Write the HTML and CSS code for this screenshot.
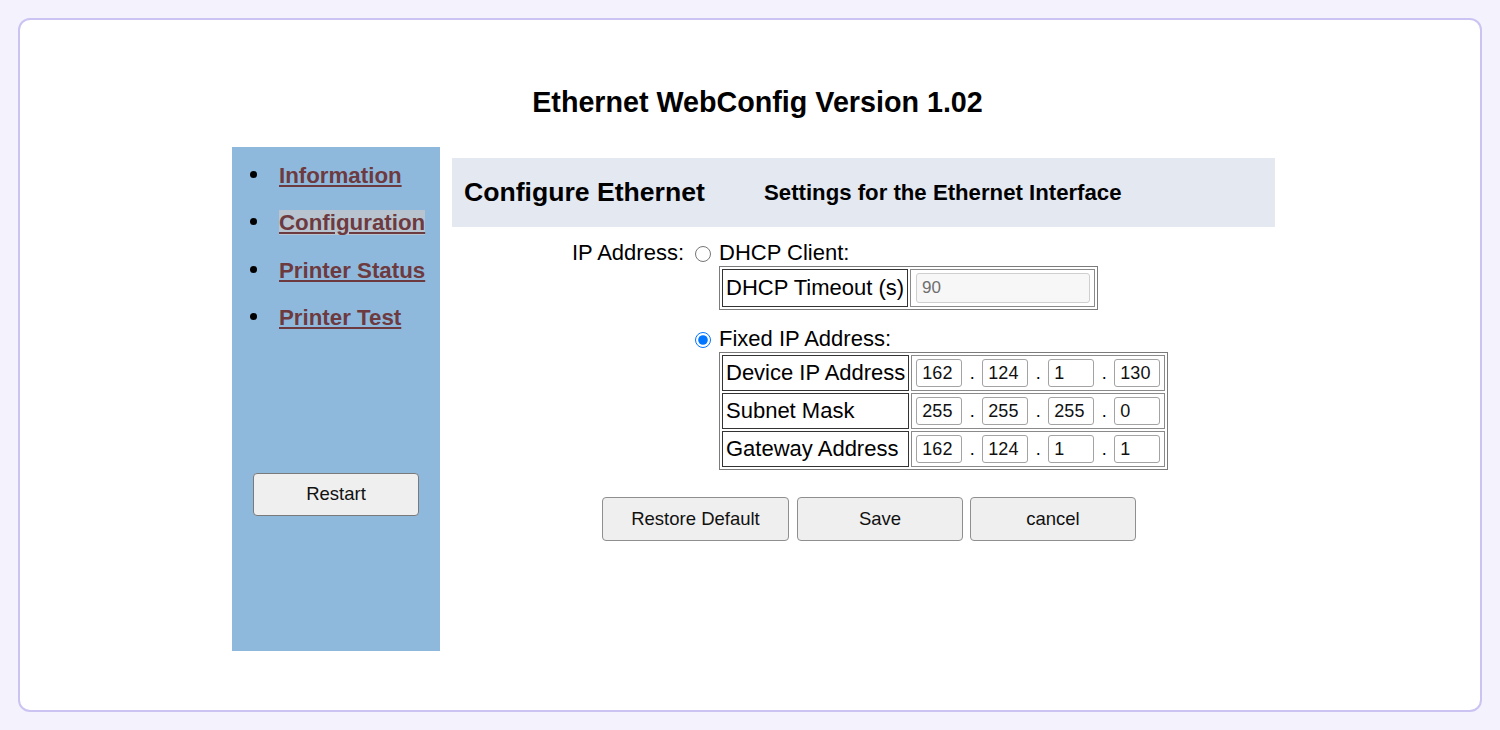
FILE: index.html
```html
<!doctype html>
<html lang="en">
<head>
    <meta charset="UTF-8">
    <title>Ethernet WebConfig</title>
    <link rel="stylesheet" href="styles.css">
</head>
<body>

<div class="page">
    <div class="frame">
        <h1 class="title">Ethernet WebConfig Version 1.02</h1>

        <div class="main">
            <div class="sidebar">
                <ul class="nav">
                    <li><a href="#">Information</a></li>
                    <li><a href="#" class="active">Configuration</a></li>
                    <li><a href="#">Printer Status</a></li>
                    <li><a href="#">Printer Test</a></li>
                </ul>
                <button class="btn btn-restart">Restart</button>
            </div>

            <div class="content">
                <div class="content-header">
                    <h2>Configure Ethernet</h2>
                    <h3>Settings for the Ethernet Interface</h3>
                </div>

                <form class="eth-form">
                    <div class="row">
                        <div class="label">IP Address:</div>
                        <div class="field">
                            <label class="opt"><input type="radio" name="mode"> DHCP Client:</label>
                            <table class="cfg-table">
                                <tr>
                                    <td class="name">DHCP Timeout (s)</td>
                                    <td class="val"><input type="text" class="ip-long" value="90" disabled></td>
                                </tr>
                            </table>
                        </div>
                    </div>

                    <div class="row row-fixed">
                        <div class="label"></div>
                        <div class="field">
                            <label class="opt"><input type="radio" name="mode" checked> Fixed IP Address:</label>
                            <table class="cfg-table">
                                <tr>
                                    <td class="name">Device IP Address</td>
                                    <td class="val">
                                        <div class="ip">
                                            <input type="text" value="162"><span>.</span><input type="text" value="124"><span>.</span><input type="text" value="1"><span>.</span><input type="text" value="130">
                                        </div>
                                    </td>
                                </tr>
                                <tr>
                                    <td class="name">Subnet Mask</td>
                                    <td class="val">
                                        <div class="ip">
                                            <input type="text" value="255"><span>.</span><input type="text" value="255"><span>.</span><input type="text" value="255"><span>.</span><input type="text" value="0">
                                        </div>
                                    </td>
                                </tr>
                                <tr>
                                    <td class="name">Gateway Address</td>
                                    <td class="val">
                                        <div class="ip">
                                            <input type="text" value="162"><span>.</span><input type="text" value="124"><span>.</span><input type="text" value="1"><span>.</span><input type="text" value="1">
                                        </div>
                                    </td>
                                </tr>
                            </table>
                        </div>
                    </div>

                    <div class="buttons">
                        <button type="button" class="btn btn-wide">Restore Default</button>
                        <button type="button" class="btn">Save</button>
                        <button type="button" class="btn">cancel</button>
                    </div>
                </form>
            </div>
        </div>
    </div>
</div>

</body>
</html>
```

FILE: styles.css
```css
* {
    margin: 0;
    padding: 0;
    box-sizing: border-box;
}
body {
    background: #f4f2fd;
    font-family: "Liberation Sans", Arial, sans-serif;
    color: #000;
}
.page {
    padding: 18px;
}
.frame {
    height: 694px;
    background: #fff;
    border: 2px solid #cbc4f2;
    border-radius: 12px;
}
.title {
    margin-top: 65px;
    padding-left: 15px;
    text-align: center;
    font-size: 28.7px;
    line-height: 34px;
    font-weight: bold;
}
.main {
    display: flex;
    align-items: flex-start;
    margin: 28px 0 0 212px;
}

/* 左侧导航 */
.sidebar {
    width: 208px;
    height: 504px;
    background: #8eb9dc;
}
.nav {
    padding: 16px 0 0 18px;
    list-style: none;
}
.nav li {
    font-size: 22.3px;
    line-height: 26px;
    margin-bottom: 21.3px;
}
.nav li::before {
    content: "";
    display: inline-block;
    width: 7px;
    height: 7px;
    margin-right: 22px;
    border-radius: 50%;
    background: #000;
    vertical-align: 5px;
}
.nav a {
    color: #6d3a40;
    font-weight: bold;
    text-decoration: underline;
}
.nav a.active {
    background: #b8c5d1;
}
.btn {
    width: 166px;
    height: 44px;
    background: #efefef;
    border: 1px solid #8f8f8f;
    border-radius: 4px;
    font-family: "Liberation Sans", Arial, sans-serif;
    font-size: 18.5px;
    color: #111;
}
.btn-restart {
    display: block;
    height: 43px;
    margin: 142px 0 0 21px;
    border-color: #7a7a7a;
}

/* 右侧内容 */
.content {
    width: 823px;
    margin: 11px 0 0 12px;
}
.content-header {
    display: flex;
    align-items: center;
    height: 69px;
    padding-left: 12px;
    background: #e4e8f1;
}
.content-header h2 {
    width: 300px;
    font-size: 26.6px;
    font-weight: bold;
}
.content-header h3 {
    font-size: 22.2px;
    font-weight: bold;
}
.eth-form {
    margin-top: 13px;
    font-size: 22px;
    line-height: 26px;
}
.row {
    display: grid;
    grid-template-columns: 232px 1fr;
}
.row-fixed {
    margin-top: 16px;
}
.label {
    text-align: right;
}
.opt {
    display: flex;
    align-items: center;
    height: 26px;
}
.opt input {
    width: 16px;
    height: 16px;
    margin: 1px 8px 0 11px;
}
.cfg-table {
    margin-left: 35px;
    border: 1px solid #7b7b7b;
    border-spacing: 2px;
}
.cfg-table td {
    border: 1px solid #333;
    white-space: nowrap;
}
.cfg-table td.name {
    padding: 0 3px;
}
.cfg-table td.val {
    padding: 3px 4px;
    border-color: #8a8a8a;
}
.cfg-table input {
    height: 28px;
    padding: 0 5px;
    border: 1px solid #a3a3a3;
    border-radius: 3px;
    font-family: "Liberation Sans", Arial, sans-serif;
    font-size: 18px;
    color: #111;
    background: #fff;
}
.cfg-table input.ip-long {
    width: 174px;
    height: 30px;
    margin-left: 1px;
    color: #6f6f6f;
    background: #f7f7f7;
    border-color: #cfcfcf;
    font-size: 17px;
}
.ip {
    display: flex;
    align-items: center;
}
.ip input {
    width: 46px;
}
.ip span {
    width: 20px;
    text-align: center;
    font-size: 18px;
}
.buttons {
    display: flex;
    gap: 7px;
    margin: 27px 0 0 150px;
}
.btn-wide {
    width: 187px;
    margin-right: 1px;
}
```
